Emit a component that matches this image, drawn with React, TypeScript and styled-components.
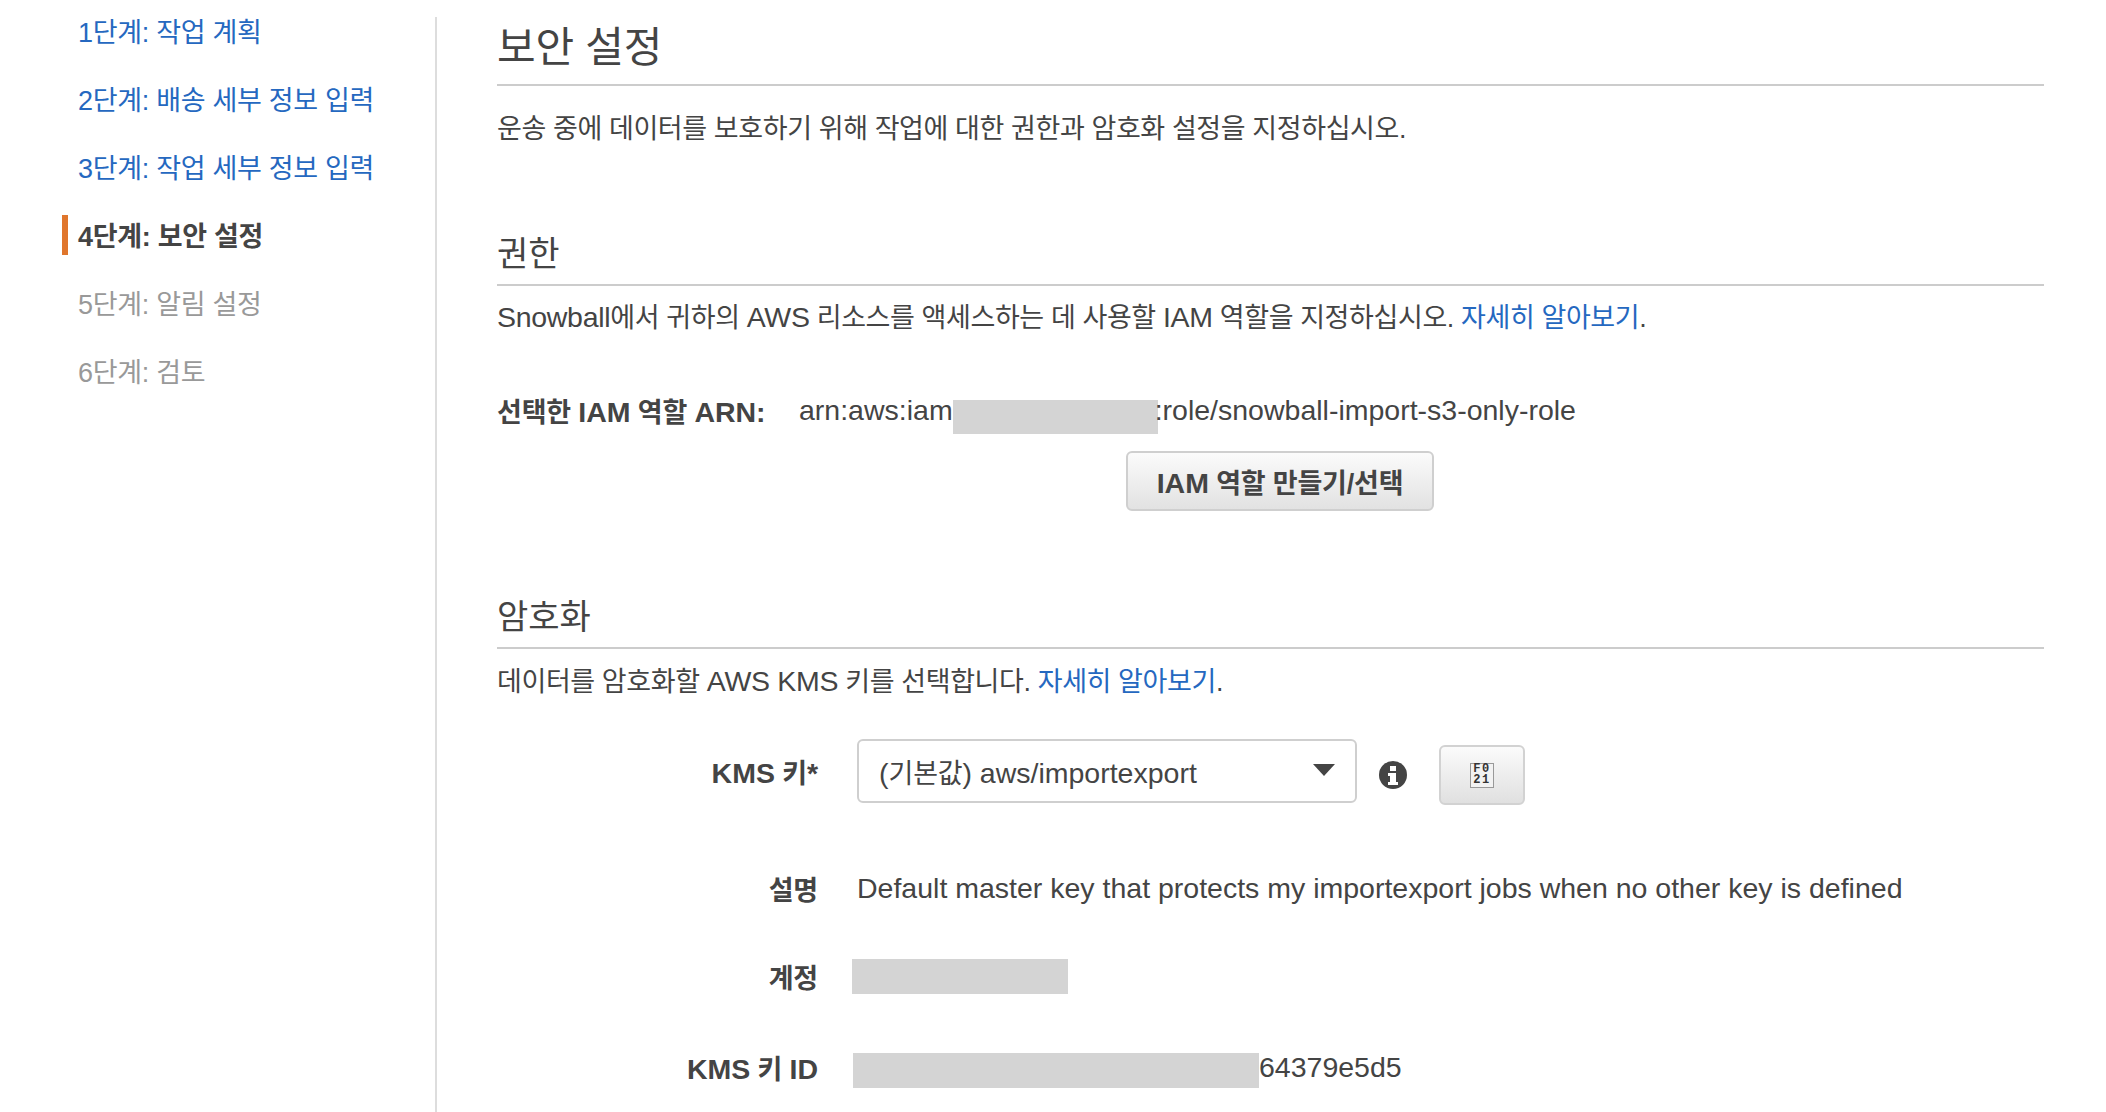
import styled, { createGlobalStyle } from "styled-components"

const GlobalStyle = createGlobalStyle`
    html, body {
        margin: 0;
        padding: 0;
        height: 100%;
        overflow: hidden;
        background: #ffffff;
    }
    body {
        font-family: "Liberation Sans", "Noto Sans CJK KR", sans-serif;
        color: #444444;
    }
`

const Page = styled.div`
    display: flex;
    width: 2106px;
    height: 1112px;
    overflow: hidden;
`

const Sidebar = styled.nav`
    width: 435px;
    flex-shrink: 0;
    margin-top: -4px;
    padding-left: 62px;
    box-sizing: border-box;
    display: flex;
    flex-direction: column;
`

type StepState = "link" | "active" | "disabled"

const stepColors: Record<StepState, string> = {
    link: "#2568c0",
    active: "#444444",
    disabled: "#999999",
}

const Step = styled.div<{ $state: StepState }>`
    display: flex;
    align-items: center;
    height: 68px;
    padding-left: 16px;
    position: relative;
    font-size: 27px;
    letter-spacing: -0.3px;
    font-weight: ${props => (props.$state === "active" ? 700 : 400)};
    color: ${props => stepColors[props.$state]};

    ${props =>
        props.$state === "active" &&
        `
        &::before {
            content: "";
            position: absolute;
            left: 0;
            top: 15px;
            width: 6px;
            height: 40px;
            background: #e0762c;
        }
    `}
`

const Main = styled.main`
    margin-top: 17px;
    width: 1609px;
    flex-shrink: 0;
    box-sizing: border-box;
    border-left: 2px solid #dddddd;
    padding-left: 60px;
`

const Title = styled.h1`
    margin: 0;
    height: 61px;
    padding-bottom: 6px;
    display: flex;
    align-items: center;
    font-size: 42px;
    font-weight: 400;
    line-height: 1;
    letter-spacing: -0.2px;
    color: #444444;
    border-bottom: 2px solid #cccccc;
`

const SectionTitle = styled.h2<{ $top: number }>`
    margin: ${props => props.$top}px 0 0;
    height: 52px;
    padding-bottom: 7px;
    display: flex;
    align-items: center;
    font-size: 34px;
    font-weight: 400;
    color: #444444;
    border-bottom: 2px solid #cccccc;
`

// Latin runs sit larger than the Korean around them
const Latin = styled.span`
    font-size: 28.5px;
    letter-spacing: 0;
`

const Paragraph = styled.p<{ $top: number }>`
    margin: ${props => props.$top}px 0 0;
    font-size: 27px;
    line-height: 40px;
    letter-spacing: -0.4px;
    color: #444444;

    ${Latin} {
        letter-spacing: -0.3px;
    }
`

const Link = styled.a`
    color: #2568c0;
    text-decoration: none;
`

const ArnRow = styled.div`
    display: flex;
    align-items: center;
    height: 40px;
    margin-top: 52px;
    font-size: 27px;
    letter-spacing: -0.2px;
`

const ArnLabel = styled.span`
    font-weight: 700;
    width: 302px;
    flex-shrink: 0;
`

const Redacted = styled.span<{ $width: number; $height: number; $shift?: number }>`
    display: inline-block;
    flex-shrink: 0;
    width: ${props => props.$width}px;
    height: ${props => props.$height}px;
    margin-left: ${props => props.$shift ?? 0}px;
    background: #d4d4d4;
`

const ArnRedacted = styled(Redacted)`
    margin-top: 14px;
    margin-right: -3px;
`

const KeyIdRedacted = styled(Redacted)`
    margin-top: 6px;
`

const ButtonRow = styled.div`
    display: flex;
    padding-left: 629px;
    margin-top: 21px;
`

const Button = styled.button`
    box-sizing: border-box;
    width: 308px;
    height: 60px;
    padding: 0;
    font-family: inherit;
    font-size: 27px;
    font-weight: 700;
    letter-spacing: -0.2px;
    color: #444444;
    background: linear-gradient(#fbfbfb, #e2e2e2);
    border: 2px solid #cfcfcf;
    border-radius: 6px;
`

const FormRow = styled.div<{ $top: number; $height: number }>`
    display: flex;
    align-items: center;
    margin-top: ${props => props.$top}px;
    height: ${props => props.$height}px;
    font-size: 27px;
    letter-spacing: -0.2px;
`

const FormLabel = styled.label`
    width: 321px;
    margin-right: 39px;
    flex-shrink: 0;
    text-align: right;
    font-weight: 700;
`

const Select = styled.div`
    box-sizing: border-box;
    width: 500px;
    height: 64px;
    display: flex;
    align-items: center;
    justify-content: space-between;
    padding: 0 20px;
    border: 2px solid #cfcfcf;
    border-radius: 6px;
`

const Caret = styled.span`
    width: 0;
    height: 0;
    border-left: 11px solid transparent;
    border-right: 11px solid transparent;
    border-top: 12px solid #444444;
    margin-bottom: 3px;
`

const InfoIcon = styled.svg`
    width: 28px;
    height: 28px;
    margin-left: 22px;
    margin-top: 8px;
    flex-shrink: 0;
`

const RefreshButton = styled.button`
    box-sizing: border-box;
    width: 86px;
    height: 60px;
    margin-left: 32px;
    margin-top: 8px;
    padding: 0;
    display: flex;
    align-items: center;
    justify-content: center;
    background: linear-gradient(#fbfbfb, #e0e0e0);
    border: 2px solid #d2d2d2;
    border-radius: 6px;
`

const MissingGlyph = styled.span`
    box-sizing: border-box;
    width: 24px;
    height: 25px;
    display: flex;
    flex-direction: column;
    align-items: center;
    justify-content: center;
    border: 1px solid #999999;
    background: #f2f2f2;
    font-family: "Liberation Mono", monospace;
    font-size: 12px;
    font-weight: 700;
    line-height: 11px;
    letter-spacing: 1.5px;
    color: #333333;
`

export default function App() {
    return (
        <Page>
            <GlobalStyle />
            <Sidebar>
                <Step $state="link">1단계: 작업 계획</Step>
                <Step $state="link">2단계: 배송 세부 정보 입력</Step>
                <Step $state="link">3단계: 작업 세부 정보 입력</Step>
                <Step $state="active">4단계: 보안 설정</Step>
                <Step $state="disabled">5단계: 알림 설정</Step>
                <Step $state="disabled">6단계: 검토</Step>
            </Sidebar>
            <Main>
                <Title>보안 설정</Title>
                <Paragraph $top={23}>운송 중에 데이터를 보호하기 위해 작업에 대한 권한과 암호화 설정을 지정하십시오.</Paragraph>

                <SectionTitle $top={76}>권한</SectionTitle>
                <Paragraph $top={11}>
                    <Latin>Snowball</Latin>에서 귀하의 <Latin>AWS</Latin> 리소스를 액세스하는 데 사용할 <Latin>IAM</Latin> 역할을 지정하십시오. <Link>자세히 알아보기</Link>.
                </Paragraph>
                <ArnRow>
                    <ArnLabel>
                        선택한 <Latin>IAM</Latin> 역할 <Latin>ARN:</Latin>
                    </ArnLabel>
                    <Latin>arn:aws:iam</Latin>
                    <ArnRedacted $width={205} $height={34} />
                    <Latin>:role/snowball-import-s3-only-role</Latin>
                </ArnRow>
                <ButtonRow>
                    <Button>
                        <Latin>IAM</Latin> 역할 만들기/선택
                    </Button>
                </ButtonRow>

                <SectionTitle $top={77}>암호화</SectionTitle>
                <Paragraph $top={12}>
                    데이터를 암호화할 <Latin>AWS KMS</Latin> 키를 선택합니다. <Link>자세히 알아보기</Link>.
                </Paragraph>

                <FormRow $top={37} $height={64}>
                    <FormLabel>
                        <Latin>KMS</Latin> 키<Latin>*</Latin>
                    </FormLabel>
                    <Select>
                        <span>
                            <Latin>(</Latin>기본값<Latin>) aws/importexport</Latin>
                        </span>
                        <Caret />
                    </Select>
                    <InfoIcon viewBox="0 0 28 28">
                        <circle cx="14" cy="14" r="14" fill="#444444" />
                        <rect x="11" y="5" width="6" height="5" fill="#ffffff" />
                        <path d="M9 12h8v9h2v3H9v-3h2v-6H9z" fill="#ffffff" />
                    </InfoIcon>
                    <RefreshButton>
                        <MissingGlyph>
                            <span>F0</span>
                            <span>21</span>
                        </MissingGlyph>
                    </RefreshButton>
                </FormRow>
                <FormRow $top={65} $height={40}>
                    <FormLabel>설명</FormLabel>
                    <Latin>Default master key that protects my importexport jobs when no other key is defined</Latin>
                </FormRow>
                <FormRow $top={48} $height={40}>
                    <FormLabel>계정</FormLabel>
                    <Redacted $width={216} $height={35} $shift={-5} />
                </FormRow>
                <FormRow $top={51} $height={40}>
                    <FormLabel>
                        <Latin>KMS</Latin> 키 <Latin>ID</Latin>
                    </FormLabel>
                    <KeyIdRedacted $width={406} $height={35} $shift={-4} />
                    <Latin>64379e5d5</Latin>
                </FormRow>
            </Main>
        </Page>
    )
}
